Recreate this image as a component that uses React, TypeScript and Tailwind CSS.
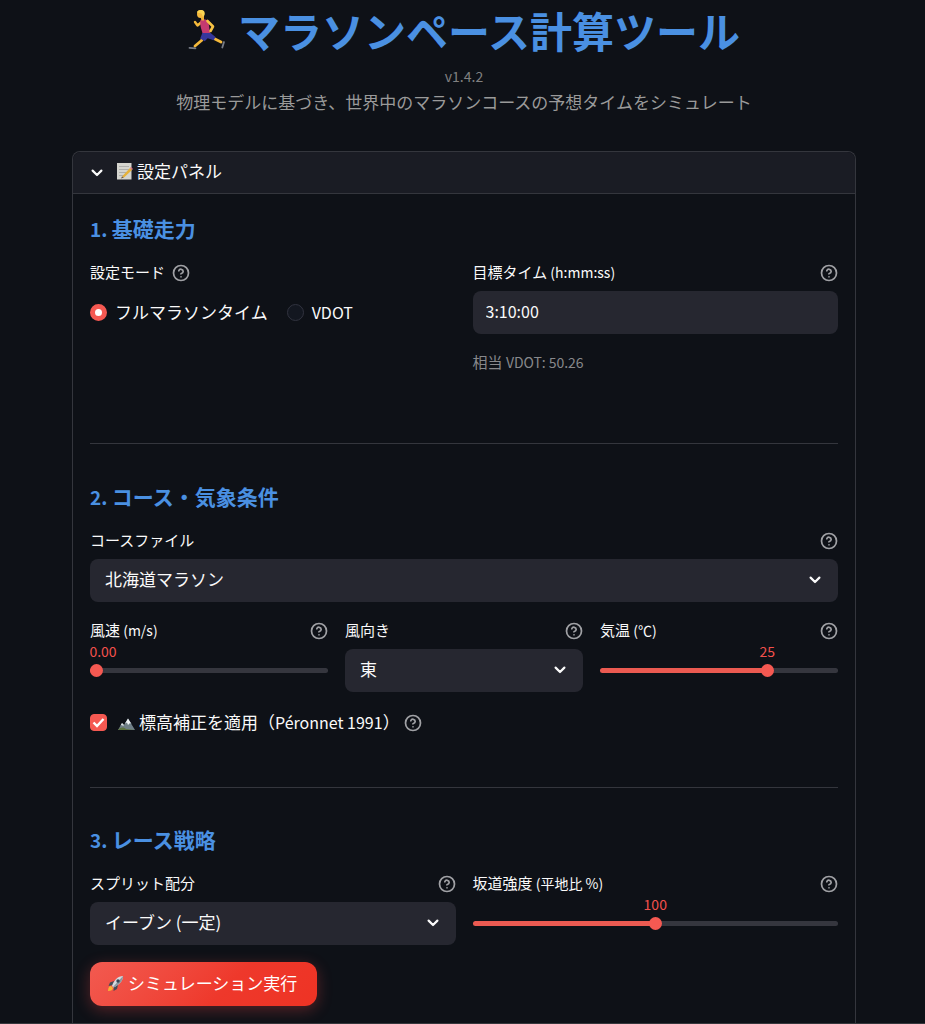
import React, { useState } from 'react';

const courses = ['北海道マラソン', '東京マラソン', '大阪マラソン'];
const directions = ['東', '西', '南', '北'];
const splits = ['イーブン (一定)', 'ネガティブ', 'ポジティブ'];

const HelpButton = ({ label }: { label: string }) => (
  <button type="button" aria-label={`${label}のヘルプ`} className="mt-0.5 shrink-0 text-[#a0a1a5]">
    <svg width="18" height="18" viewBox="0 0 24 24" fill="none" stroke="currentColor" strokeWidth="2.3" strokeLinecap="round" strokeLinejoin="round">
      <circle cx="12" cy="12" r="10" />
      <path d="M9.09 9a3 3 0 0 1 5.83 1c0 2-3 3-3 3" />
      <path d="M12 17h.01" />
    </svg>
  </button>
);

const Chevron = ({ className = '' }: { className?: string }) => (
  <svg className={className} width="12" height="8" viewBox="0 0 12 8" fill="none" stroke="currentColor" strokeWidth="2.2" strokeLinecap="round" strokeLinejoin="round">
    <path d="M1.6 1.6 6 6l4.4-4.4" />
  </svg>
);

const RunnerIcon = () => (
  <svg width="38" height="42" viewBox="0 0 38 42" fill="none" strokeLinecap="round" strokeLinejoin="round">
    {/* far arm and legs */}
    <path d="M13 13.500 9.500 16.500 7 13" stroke="#f5b93a" strokeWidth="2.400" />
    <path d="M16 27 13.500 31.500 7 37" stroke="#f5b93a" strokeWidth="2.800" />
    <path d="M23 27.500 27 30 33 33" stroke="#f5b93a" strokeWidth="2.800" />
    <path d="M1.500 38.800 7.500 39.300" stroke="#777b86" strokeWidth="1.800" />
    <path d="M36 33 34.300 38.500" stroke="#777b86" strokeWidth="1.800" />
    <path d="M14.500 23.500h7.500l5.500 4.500-1.800 3.200-6-2-3 3-4.500-2.700z" fill="#35379c" />
    <path d="M12.500 11c3.500-1.500 7-.5 8 2l1.500 11h-7.500c-1-4-3-8-2-13z" fill="#c43a70" />
    {/* near arm */}
    <path d="M19.500 12 25 17.500 22.500 22" stroke="#f7c244" strokeWidth="2.600" />
    <path d="M12 6h4v5.500h-2.500z" fill="#f0ae35" />
    <ellipse cx="12.500" cy="5" rx="3.500" ry="4" fill="#f5b83c" />
    <path d="M9 3.500C9 .5 15.500 0 16.500 3c.7 2 0 4-1.500 5l-1.500-3.500z" fill="#fbd552" />
  </svg>
);

const MemoIcon = () => (
  <svg width="17" height="18" viewBox="0 0 17 18">
    <path d="M1 1h14.500v16.500H1z" fill="#d5d5cf" />
    <path d="M3 4.500h10M3 7.500h10M3 10.500h7M3 13.500h5" stroke="#a5a6a3" strokeWidth="0.8" />
    <path d="M6 14.500 14 6l2 2-8 7.500z" fill="#e6b23a" />
    <path d="M14 6l1-1 2 2-1 1z" fill="#d9737f" />
    <path d="M6 14.500l-1 2 3-1z" fill="#6b5540" />
  </svg>
);

const MountainIcon = () => (
  <svg width="17" height="17" viewBox="0 0 17 17">
    <path d="M0 16 4 9l2 2 4-6.500L17 16z" fill="#6f7f86" />
    <path d="M10 4.500 7 9.500l2-1 1 2.500 2-2 1.500 1z" fill="#eef2f4" />
    <path d="M4 9 2.500 11.500 4 11l1 1 1-1z" fill="#dfe6e8" />
    <path d="M0 16c3-3 5-3 8-1l9 1z" fill="#5d7440" />
  </svg>
);

const RocketIcon = () => (
  <svg width="17" height="17" viewBox="0 0 17 17">
    <path d="M1 16c0-3 1-5 3-5l2 2c0 2-2 3-5 3z" fill="#f9b233" />
    <path d="M7 6 3 7.500 1.500 11 6 10zM11 10l-1 4-3.500 2L7 11z" fill="#454b56" />
    <path d="M16 1c-5 0-9 4-11 10l1.500 1.500C12 10 16 6 16 1z" fill="#d5dbe0" />
    <path d="M16 1 6 12l.5.5C12 10 16 6 16 1z" fill="#8c979f" />
    <circle cx="11" cy="6" r="1.700" fill="#354556" />
  </svg>
);

interface FieldLabelProps {
  id: string;
  text: string;
  unit?: string;
}

const FieldLabel = ({ id, text, unit }: FieldLabelProps) => (
  <div className="flex h-[22px] items-center justify-between">
    <label htmlFor={id} className="text-[15px] leading-[22px]">
      {text}
      {unit && <span className="text-sm"> ({unit})</span>}
    </label>
    <HelpButton label={text} />
  </div>
);

interface SelectProps {
  id: string;
  label: string;
  options: string[];
}

const SelectField = ({ id, label, options }: SelectProps) => {
  const [value, setValue] = useState(options[0]);
  return (
    <div>
      <FieldLabel id={id} text={label} />
      <div className="relative mt-2">
        <select
          id={id}
          value={value}
          onChange={(e) => setValue(e.target.value)}
          className="h-[43px] w-full appearance-none rounded-lg bg-[#262730] pr-10 pb-[3px] pl-[15px] text-[17px]"
        >
          {options.map((option) => (
            <option key={option}>{option}</option>
          ))}
        </select>
        <Chevron className="pointer-events-none absolute top-[17px] right-[17px]" />
      </div>
    </div>
  );
};

interface SliderProps {
  id: string;
  label: string;
  unit: string;
  max: number;
  step: number;
  initial: number;
  digits?: number;
}

const SliderField = ({ id, label, unit, max, step, initial, digits = 0 }: SliderProps) => {
  const [value, setValue] = useState(initial);
  const ratio = value / max;
  // centre of the thumb, which is 13px wide
  const center = `calc(${ratio * 100}% + ${6.5 - ratio * 13}px)`;
  return (
    <div>
      <FieldLabel id={id} text={label} unit={unit} />
      <div className="relative h-5">
        <output
          htmlFor={id}
          className="absolute -translate-x-1/2 text-sm leading-5 text-[#f2504c]"
          style={{ left: `max(13px, ${center})` }}
        >
          {value.toFixed(digits)}
        </output>
      </div>
      <input
        id={id}
        type="range"
        min={0}
        max={max}
        step={step}
        value={value}
        onChange={(e) => setValue(Number(e.target.value))}
        className="mt-[3px] block h-[13px] w-full appearance-none rounded-full bg-transparent [&::-webkit-slider-runnable-track]:h-[5px] [&::-webkit-slider-runnable-track]:rounded-full [&::-webkit-slider-runnable-track]:bg-[image:var(--track)] [&::-webkit-slider-thumb]:-mt-1 [&::-webkit-slider-thumb]:size-[13px] [&::-webkit-slider-thumb]:appearance-none [&::-webkit-slider-thumb]:rounded-full [&::-webkit-slider-thumb]:bg-[#f55952]"
        style={{ '--track': `linear-gradient(to right, #eb5a51 ${center}, #35363e ${center})` } as React.CSSProperties}
      />
    </div>
  );
};

const SectionTitle = ({ step, children }: { step: number; children: React.ReactNode }) => (
  <h2 className="mb-[18px] text-[21px] leading-7 font-bold text-[#4a90e2]">
    <span className="text-[19px]">{step}. </span>
    {children}
  </h2>
);

const radioClass =
  'size-[17px] shrink-0 appearance-none rounded-full border border-[#31333f] bg-[#131720] checked:border-[5px] checked:border-[#f55952] checked:bg-white';

const App = () => {
  const [open, setOpen] = useState(true);
  const [mode, setMode] = useState('full');
  const [time, setTime] = useState('3:10:00');
  const [altitude, setAltitude] = useState(true);

  return (
    <main className="flex min-h-screen flex-col border-b border-[#35373c] bg-[#0e1117] pt-[5px] pr-[69px] pl-[72px] font-['Noto_Sans_CJK_JP',sans-serif] text-[#fafafa]">
      <header className="text-center">
        <h1 className="flex items-center justify-center gap-3 text-[42px] leading-[50px] font-bold text-[#4a90e2]">
          <RunnerIcon />
          マラソンペース計算ツール
        </h1>
        <p className="mt-[11px] text-sm leading-5 text-[#808080]">v1.4.2</p>
        <p className="mt-1 text-[17px] leading-6 text-[#9a9a9a]">
          物理モデルに基づき、世界中のマラソンコースの予想タイムをシミュレート
        </p>
      </header>

      <section className="mt-[37px] grow rounded-t-lg border border-b-0 border-[#34363d]">
        <button
          type="button"
          aria-expanded={open}
          onClick={() => setOpen(!open)}
          className="flex h-[42px] w-full items-center rounded-t-lg border-b border-[#34363d] bg-[#1a1c24] pl-[18px] text-[17px]"
        >
          <Chevron />
          <span className="ml-[13px] flex items-center gap-1 pb-[3px]">
            <MemoIcon />
            設定パネル
          </span>
        </button>

        {open && (
          <form className="px-[17px] pt-5 pb-[17px]" onSubmit={(e) => e.preventDefault()}>
            <SectionTitle step={1}>基礎走力</SectionTitle>
            <div className="grid grid-cols-2 gap-[17px]">
              <fieldset>
                <div className="flex h-[22px] items-center gap-[7px] text-[15px]">
                  <legend>設定モード</legend>
                  <HelpButton label="設定モード" />
                </div>
                <div className="mt-[17px] flex gap-[19px] text-[17px] leading-6">
                  <label className="flex items-center gap-2">
                    <input type="radio" name="mode" checked={mode === 'full'} onChange={() => setMode('full')} className={radioClass} />
                    フルマラソンタイム
                  </label>
                  <label className="flex items-center gap-2">
                    <input type="radio" name="mode" checked={mode === 'vdot'} onChange={() => setMode('vdot')} className={radioClass} />
                    <span className="text-base">VDOT</span>
                  </label>
                </div>
              </fieldset>
              <div>
                <FieldLabel id="target" text="目標タイム" unit="h:mm:ss" />
                <input
                  id="target"
                  type="text"
                  value={time}
                  onChange={(e) => setTime(e.target.value)}
                  className="mt-2 h-[43px] w-full rounded-lg bg-[#262730] px-[13px] pb-[3px] text-base"
                />
                <p className="mt-[17px] text-[15px] leading-[22px] text-[#87888b]">
                  相当 <span className="text-sm">VDOT: 50.26</span>
                </p>
              </div>
            </div>
            <hr className="mt-[70px] mb-[38px] border-[#34363d]" />

            <SectionTitle step={2}>コース・気象条件</SectionTitle>
            <SelectField id="course" label="コースファイル" options={courses} />
            <div className="mt-[17px] grid grid-cols-3 gap-[17px]">
              <SliderField id="wind" label="風速" unit="m/s" max={10} step={0.1} initial={0} digits={2} />
              <SelectField id="direction" label="風向き" options={directions} />
              <SliderField id="temperature" label="気温" unit="℃" max={35} step={1} initial={25} />
            </div>
            <div className="mt-[18px] flex items-center gap-1 text-[17px] leading-6">
              <label className="flex items-center gap-[11px]">
                <span className="relative flex">
                  <input
                    type="checkbox"
                    checked={altitude}
                    onChange={(e) => setAltitude(e.target.checked)}
                    className="size-[17px] appearance-none rounded border border-[#4a4c55] checked:border-[#f55952] checked:bg-[#f55952]"
                  />
                  {altitude && (
                    <svg className="pointer-events-none absolute inset-0" width="17" height="17" viewBox="0 0 17 17" fill="none" stroke="white" strokeWidth="2.4">
                      <path d="M3.500 8.500 7 12l6.500-7" />
                    </svg>
                  )}
                </span>
                <span className="flex items-center gap-1">
                  <MountainIcon />
                  <span>
                    標高補正を適用（<span className="text-base">Péronnet 1991</span>）
                  </span>
                </span>
              </label>
              <HelpButton label="標高補正" />
            </div>
            <hr className="mt-[53px] mb-[37px] border-[#34363d]" />

            <SectionTitle step={3}>レース戦略</SectionTitle>
            <div className="grid grid-cols-2 gap-[17px]">
              <SelectField id="split" label="スプリット配分" options={splits} />
              <SliderField id="slope" label="坂道強度" unit="平地比 %" max={200} step={1} initial={100} />
            </div>
            <button
              type="submit"
              className="mt-[17px] flex h-11 items-center gap-1 rounded-xl bg-linear-135 from-[#f25a50] via-[#ee382b] via-60% to-[#ee3324] pr-5 pb-0.5 pl-[17px] text-[17px] text-white shadow-[0_4px_15px_rgba(255,75,75,0.3)]"
            >
              <RocketIcon />
              シミュレーション実行
            </button>
          </form>
        )}
      </section>
    </main>
  );
};

export default App;
